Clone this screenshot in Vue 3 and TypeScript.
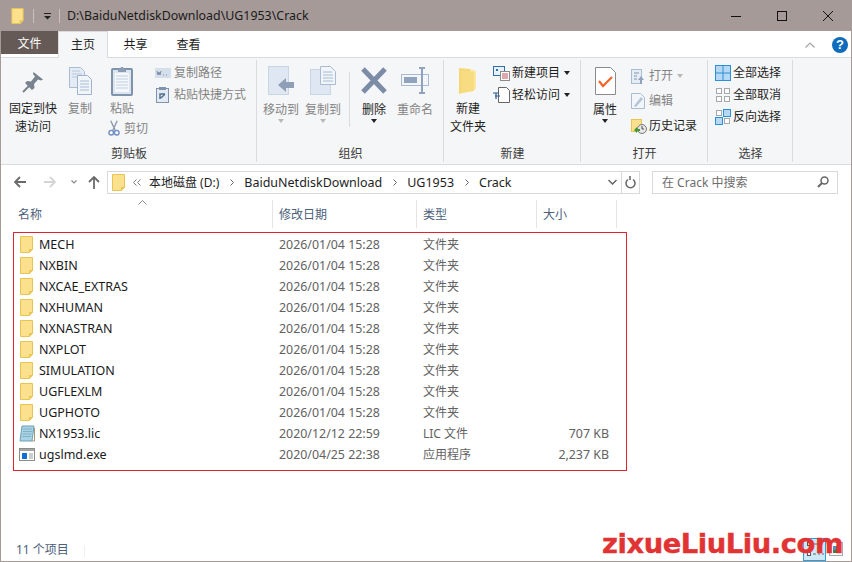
<script setup lang="ts">
interface Row { name: string; date: string; type: string; size: string; icon: string }
const folders = ['MECH', 'NXBIN', 'NXCAE_EXTRAS', 'NXHUMAN', 'NXNASTRAN', 'NXPLOT', 'SIMULATION', 'UGFLEXLM', 'UGPHOTO']
const rows: Row[] = [
  ...folders.map((name) => ({ name, date: '2026/01/04 15:28', type: '文件夹', size: '', icon: 'i-folder' })),
  { name: 'NX1953.lic', date: '2020/12/12 22:59', type: 'LIC 文件', size: '707 KB', icon: 'i-note' },
  { name: 'ugslmd.exe', date: '2020/04/25 22:38', type: '应用程序', size: '2,237 KB', icon: 'i-exe' },
]
const crumbs = ['本地磁盘 (D:)', 'BaiduNetdiskDownload', 'UG1953', 'Crack']
const columns = [
  { label: '名称', width: 255 },
  { label: '修改日期', width: 144 },
  { label: '类型', width: 120 },
  { label: '大小', width: 80 },
]
</script>

<template>
  <div class="window">
    <svg class="defs" width="0" height="0">
      <symbol id="i-folder" viewBox="0 0 13 17">
        <path d="M.5.5h12v13h-3v3H.5z" fill="#fbe08e" stroke="#e8c452" />
        <path d="M9.500 16.500v-3h3z" fill="#f5d36d" stroke="#e8c452" />
      </symbol>
      <symbol id="i-note" viewBox="0 0 16 17">
        <path d="M3 1h12l-2 15H1z" fill="#a8d3e4" stroke="#6f9fb2" />
        <path d="M4 4h9M4 6.500h9M3.500 9h9M3 11.500h9" stroke="#7fb2c6" />
        <path d="M13 16h2.500V3" fill="none" stroke="#a49677" />
      </symbol>
      <symbol id="i-exe" viewBox="0 0 16 13">
        <rect x=".5" y=".5" width="15" height="12" fill="#fff" stroke="#8c8c8c" />
        <rect x="1" y="1" width="14" height="2" fill="#a5a5a5" />
        <rect x="3" y="5" width="5" height="6" fill="#0f6fd0" />
        <path d="M10 6h4M10 8h4M10 10h4" stroke="#9a9a9a" />
      </symbol>
    </svg>

    <header class="titlebar">
      <svg class="t-folder" width="13" height="16"><use href="#i-folder" /></svg>
      <span class="t-sep"></span>
      <svg class="t-drop" width="9" height="7" viewBox="0 0 9 7"><path d="M1 .5h7" stroke="#222" /><path d="M1 3h7L4.500 6.500z" fill="#222" /></svg>
      <span class="t-sep t-sep2"></span>
      <span class="t-title">D:\BaiduNetdiskDownload\UG1953\Crack</span>
      <div class="t-controls">
        <svg width="12" height="12" viewBox="0 0 12 12"><path d="M1 6.500h10" stroke="#111" /></svg>
        <svg width="12" height="12" viewBox="0 0 12 12"><rect x="1.500" y="1.500" width="9" height="9" fill="none" stroke="#111" /></svg>
        <svg width="12" height="12" viewBox="0 0 12 12"><path d="M1 1l10 10M11 1L1 11" stroke="#111" /></svg>
      </div>
    </header>

    <nav class="tabs">
      <span class="tab file">文件</span>
      <span class="tab active">主页</span>
      <span class="tab">共享</span>
      <span class="tab">查看</span>
      <span class="spacer"></span>
      <svg class="collapse" width="10" height="6" viewBox="0 0 10 6"><path d="M.5 5.500L5 1l4.500 4.500" fill="none" stroke="#a5a5a5" stroke-width="1.200" /></svg>
      <span class="help">?</span>
    </nav>

    <section class="ribbon">
      <div class="group g-clip">
        <div class="g-body">
          <div class="big w-pin">
            <svg class="ico" width="26" height="30" viewBox="0 0 26 30"><path d="M13.500 6L23 13.500l-2 1-3-1-4 4.500.5 4-2.500 2-7-7 2-2 4 .5 4-5-2-2.500z" fill="#79838f" /><path d="M9 20l-6 6" stroke="#79838f" stroke-width="2" /></svg>
            <span>固定到快<br />速访问</span>
          </div>
          <div class="big w-copy off">
            <svg class="ico" width="25" height="30" viewBox="0 0 25 30"><path d="M1.500 1.500h11l4 4v16h-15z" fill="#e4ebf4" stroke="#a9bcd3" /><path d="M4 5h8M4 8h10M4 11h5" stroke="#b9c8da" /><path d="M9.500 9.500h10l4 4v15h-14z" fill="#f1f5fa" stroke="#9fb4cf" /><path d="M12 15h9M12 18h9M12 21h9M12 24h9" stroke="#a9bcd3" /></svg>
            <span>复制</span>
          </div>
          <div class="paste-col">
            <div class="big off">
              <svg class="ico" width="22" height="30" viewBox="0 0 22 30"><rect x="1" y="3" width="20" height="26" rx="1" fill="#dce4ee" stroke="#7f93ad" stroke-width="2" /><rect x="4" y="7" width="14" height="19" fill="#f4f7fb" /><path d="M5 10h12M5 13h12M5 16h12M5 19h12M5 22h12" stroke="#c2cfdf" /><path d="M7 6V3h2l1-2h2l1 2h2v3z" fill="#8d9db3" /></svg>
              <span>粘贴</span>
            </div>
            <div class="small off cut">
              <svg width="13" height="17" viewBox="0 0 13 17"><path d="M3 0l5 11M10 0L5 11" stroke="#8d99ab" stroke-width="1.500" /><circle cx="3.500" cy="13" r="2.500" fill="none" stroke="#6f8fc0" stroke-width="1.500" /><circle cx="9.500" cy="13" r="2.500" fill="none" stroke="#6f8fc0" stroke-width="1.500" /></svg>
              <span class="cut-label">剪切</span>
            </div>
          </div>
          <div class="small-col clip-small">
            <div class="small off">
              <svg width="16" height="10" viewBox="0 0 16 10"><rect width="16" height="10" fill="#d5dfec" /><path d="M2 3l1 4 1-3 1 3 1-4M8 7h1M11 7h1" stroke="#7b8ca3" fill="none" /></svg>
              <span>复制路径</span>
            </div>
            <div class="small off">
              <svg class="shortcut" width="13" height="16" viewBox="0 0 13 16"><rect x=".5" y="1.500" width="12" height="14" fill="#e3eaf3" stroke="#7f93ad" /><rect x="3" y="0" width="7" height="3" fill="#7f93ad" /><path d="M4 12V7h5M9 7l-4 4" fill="none" stroke="#53708f" stroke-width="1.500" /></svg>
              <span>粘贴快捷方式</span>
            </div>
          </div>
        </div>
        <div class="g-label">剪贴板</div>
      </div>

      <div class="group g-org">
        <div class="g-body">
          <div class="big w-move off lower">
            <svg class="ico" width="27" height="30" viewBox="0 0 27 30"><rect x=".5" y=".5" width="20" height="28" fill="#dfe7f2" stroke="#c9d6e6" /><path d="M10 19l8-7v4h8v6h-8v4z" fill="#8e9fb7" /></svg>
            <span>移动到</span><i class="arr off-arr"></i>
          </div>
          <div class="big w-copyto off lower">
            <svg class="ico" width="27" height="30" viewBox="0 0 27 30"><rect x=".5" y="3.500" width="20" height="25" fill="#dfe7f2" stroke="#c9d6e6" /><path d="M10.500.5h10l5 5v13h-15z" fill="#f1f5fa" stroke="#a9bcd3" /><path d="M13 6h9M13 9h10M13 12h10M13 15h10" stroke="#a9bcd3" /></svg>
            <span>复制到</span><i class="arr off-arr"></i>
          </div>
          <span class="inner-sep"></span>
          <div class="big w-del lower">
            <svg class="ico" width="26" height="30" viewBox="0 0 26 30"><path d="M2 3l22 23M24 3L2 26" stroke="#7c8ca7" stroke-width="5" /></svg>
            <span>删除</span><i class="arr"></i>
          </div>
          <div class="big w-ren off lower">
            <svg class="ico" width="29" height="30" viewBox="0 0 29 30"><rect x=".5" y="8.500" width="27" height="11" fill="#f2f5fa" stroke="#a8b9d0" /><rect x="3" y="11" width="13" height="6" fill="#8fa3be" /><path d="M18 2h6M18 27h6M21 2v25" stroke="#8fa3be" stroke-width="2" /></svg>
            <span>重命名</span>
          </div>
        </div>
        <div class="g-label">组织</div>
      </div>

      <div class="group g-new">
        <div class="g-body">
          <div class="big w-newf">
            <svg class="ico" width="20" height="30" viewBox="0 0 20 30"><path d="M1 2l11 1v22L1 28z" fill="#f6d977" /><path d="M12 3l6 2v18l-6 3z" fill="#fbe7a1" /><path d="M4 5l12 1v19l-12 2z" fill="#f7dc82" /></svg>
            <span>新建<br />文件夹</span>
          </div>
          <div class="small-col new-small">
            <div class="small">
              <svg width="17" height="15" viewBox="0 0 17 15"><rect x=".5" y=".5" width="11" height="9" fill="#e8f1fa" stroke="#2f6ea8" /><rect x="3" y="3" width="2" height="2" fill="#2f6ea8" /><rect x="7.500" y="5.500" width="9" height="9" fill="#fff" stroke="#8b8b8b" /><path d="M9 8h6M9 10h6M9 12h6" stroke="#c05050" /></svg>
              <span>新建项目</span><i class="arr inline"></i>
            </div>
            <div class="small">
              <svg width="17" height="16" viewBox="0 0 17 16"><path d="M5.500.5h8l3 3v12h-11z" fill="#fff" stroke="#666" /><path d="M0 6h6M2 9h5M3 6v6" stroke="#2b5b93" stroke-width="1.200" /></svg>
              <span>轻松访问</span><i class="arr inline"></i>
            </div>
          </div>
        </div>
        <div class="g-label">新建</div>
      </div>

      <div class="group g-open">
        <div class="g-body">
          <div class="big w-prop lower">
            <svg class="ico" width="21" height="28" viewBox="0 0 21 28"><path d="M.5.5h15l5 5v22H.5z" fill="#fff" stroke="#8b8b8b" /><path d="M4 14l4 5 9-9" fill="none" stroke="#f0672a" stroke-width="2.200" /></svg>
            <span>属性</span><i class="arr"></i>
          </div>
          <div class="small-col open-small">
            <div class="small off">
              <svg class="narrow" width="14" height="15" viewBox="0 0 14 15"><rect x=".5" y=".5" width="10" height="14" fill="#e7edf5" stroke="#a9bcd3" /><path d="M3 4h5M3 7h3M3 10h3" stroke="#7f93ad" /><path d="M7 11l3-4 3 4h-2v4H9v-4z" fill="#8fa3be" /></svg>
              <span>打开</span><i class="arr inline off-arr"></i>
            </div>
            <div class="small off">
              <svg class="narrow" width="14" height="16" viewBox="0 0 14 16"><path d="M.5.500h9l4 4v11H.5z" fill="#f2f5fa" stroke="#a9bcd3" /><path d="M3 13l7-9 2 2-7 8z" fill="#b4c3d7" /></svg>
              <span>编辑</span>
            </div>
            <div class="small hist">
              <svg width="16" height="15" viewBox="0 0 16 15"><rect x=".5" y=".5" width="10" height="12" fill="#fbe08e" stroke="#e8c452" /><circle cx="11" cy="10" r="4.500" fill="#e6e6e6" stroke="#777" /><path d="M11 7v3h2" stroke="#555" fill="none" /><path d="M3 11l3-3v2h3v2H6v2z" fill="#3d9b37" /></svg>
              <span>历史记录</span>
            </div>
          </div>
        </div>
        <div class="g-label">打开</div>
      </div>

      <div class="group g-sel">
        <div class="g-body">
          <div class="small-col sel-small">
            <div class="small">
              <svg width="16" height="16" viewBox="0 0 16 16"><rect x=".5" y=".5" width="15" height="15" fill="#b5d8f4" stroke="#2d8fd6" /><path d="M8 0v16M0 8h16" stroke="#2d8fd6" /></svg>
              <span>全部选择</span>
            </div>
            <div class="small">
              <svg width="16" height="16" viewBox="0 0 16 16"><g fill="#fff" stroke="#a8a8a8"><rect x="1.500" y="1.500" width="5" height="5" /><rect x="9.500" y="1.500" width="5" height="5" /><rect x="1.500" y="9.500" width="5" height="5" /><rect x="9.500" y="9.500" width="5" height="5" /></g></svg>
              <span>全部取消</span>
            </div>
            <div class="small">
              <svg width="16" height="16" viewBox="0 0 16 16"><g fill="#fff" stroke="#a8a8a8"><rect x="1.500" y="1.500" width="5" height="5" /><rect x="9.500" y="9.500" width="5" height="5" /></g><g fill="#b5d8f4" stroke="#2d8fd6"><rect x="8.500" y=".5" width="7" height="7" /><rect x=".5" y="8.500" width="7" height="7" /></g></svg>
              <span>反向选择</span>
            </div>
          </div>
        </div>
        <div class="g-label">选择</div>
      </div>
    </section>

    <div class="navbar">
      <svg class="n-back" width="12" height="12" viewBox="0 0 12 12"><path d="M6 1L1 6l5 5M1 6h11" fill="none" stroke="#6b6b6b" stroke-width="1.800" /></svg>
      <svg class="n-fwd" width="12" height="12" viewBox="0 0 12 12"><path d="M6 1l5 5-5 5M11 6H0" fill="none" stroke="#d5d5d5" stroke-width="1.800" /></svg>
      <svg class="n-down" width="6" height="4" viewBox="0 0 6 4"><path d="M.5.500L3 3 5.500.5" fill="none" stroke="#8a8a8a" stroke-width="1.200" /></svg>
      <svg class="n-up" width="12" height="13" viewBox="0 0 12 13"><path d="M1 6l5-5 5 5M6 1v12" fill="none" stroke="#6b6b6b" stroke-width="1.800" /></svg>
      <div class="address">
        <svg width="13" height="17" class="a-folder"><use href="#i-folder" /></svg>
        <svg class="chev-dbl" width="8" height="7" viewBox="0 0 8 7"><path d="M3.500.5l-3 3 3 3M7.500.5l-3 3 3 3" fill="none" stroke="#777" /></svg>
        <template v-for="(c, i) in crumbs" :key="c">
          <span class="crumb" :class="{ first: i === 0 }">{{ c }}</span>
          <svg v-if="i < crumbs.length - 1" class="crumb-sep" width="4" height="7" viewBox="0 0 4 7"><path d="M.5.5l3 3-3 3" fill="none" stroke="#666" /></svg>
        </template>
        <span class="spacer"></span>
        <svg class="a-drop" width="9" height="6" viewBox="0 0 9 6"><path d="M.5 1l4 4 4-4" fill="none" stroke="#666" stroke-width="1.500" /></svg>
        <span class="a-refresh">
          <svg width="11" height="13" viewBox="0 0 11 13"><path d="M3 3.500a4.500 4.500 0 1 0 5 0M5 0v4" fill="none" stroke="#666" stroke-width="1.500" /></svg>
        </span>
      </div>
      <div class="search">
        <span class="s-text">在 Crack 中搜索</span>
        <svg width="12" height="12" viewBox="0 0 12 12"><circle cx="7.500" cy="4.500" r="3.500" fill="none" stroke="#666" stroke-width="1.500" /><path d="M5 7l-4 4" stroke="#666" stroke-width="2" /></svg>
      </div>
    </div>

    <main class="content">
      <div class="head">
        <svg class="sort" width="9" height="5" viewBox="0 0 9 5"><path d="M.5 4.500l4-4 4 4" fill="none" stroke="#8a8a8a" /></svg>
        <div v-for="c in columns" :key="c.label" class="head-cell" :style="{ width: c.width + 'px' }">{{ c.label }}</div>
      </div>
      <div class="marked">
        <div v-for="r in rows" :key="r.name" class="row">
          <svg class="r-ico" :class="{ wide: r.icon !== 'i-folder' }" :width="r.icon === 'i-folder' ? 13 : 16" :height="r.icon === 'i-exe' ? 13 : 17"><use :href="'#' + r.icon" /></svg>
          <span class="r-name">{{ r.name }}</span>
          <span class="r-date">{{ r.date }}</span>
          <span class="r-type">{{ r.type }}</span>
          <span class="r-size">{{ r.size }}</span>
        </div>
      </div>
    </main>

    <footer class="status">
      <span class="count">11 个项目</span>
      <span class="s-sep"></span>
      <span class="spacer"></span>
      <span class="view on">
        <svg width="20" height="17" viewBox="0 0 20 17"><rect x="2.500" y="1.500" width="3" height="3" fill="#fff" stroke="#555" /><rect x="2.500" y="11.500" width="3" height="3" fill="#fff" stroke="#555" /><path d="M8 3h10M8 13h3M13 13h2M17 13h2" stroke="#666" /></svg>
      </span>
      <span class="view">
        <svg width="14" height="14" viewBox="0 0 14 14"><rect x=".5" y=".5" width="13" height="13" fill="#fff" stroke="#a8a8a8" /><rect x="4" y="4" width="7" height="7" fill="#5a8fb8" /><rect x="4" y="8" width="7" height="3" fill="#4b7a3e" /></svg>
      </span>
    </footer>

    <div class="watermark">zixueLiuLiu.com</div>
  </div>
</template>

<style scoped>
.window {
  position: relative;
  box-sizing: border-box;
  width: 852px;
  height: 562px;
  display: flex;
  flex-direction: column;
  overflow: hidden;
  background: #fff;
  border: 1px solid #a69a98;
  border-top: 0;
  font: 12px/16px "Noto Sans", "Noto Sans CJK SC", sans-serif;
  color: #1e1e1e;
}
.defs { position: absolute; }
.spacer { flex: 1; }

.titlebar {
  flex: none;
  height: 31px;
  margin: 0 -1px;
  background: #a69a98;
  display: flex;
  align-items: center;
}
.t-folder { margin-left: 11px; }
.t-sep { width: 1px; height: 14px; background: #c8c0be; margin-left: 9px; }
.t-drop { margin-left: 9px; margin-top: 2px; }
.t-sep2 { margin-left: 7px; }
.t-title { margin-left: 7px; font-size: 12.4px; color: #1a1a1a; }
.t-controls { margin-left: auto; display: flex; gap: 34px; padding-right: 18px; }

.tabs {
  flex: none;
  height: 27px;
  display: flex;
  align-items: center;
  position: relative;
}
.tab { width: 53px; text-align: center; font-size: 12px; }
.tab.file { width: 57px; align-self: stretch; line-height: 25px; height: 23px; margin-bottom: 4px; background: #665a57; color: #fff; }
.tab.active {
  width: 50px;
  align-self: stretch;
  line-height: 25px;
  background: #f5f6f7;
  border: 1px solid #dadbdc;
  border-bottom: 0;
  box-sizing: border-box;
  margin-right: 1px;
}
.collapse { margin-right: 17px; }
.help {
  width: 16px;
  height: 16px;
  margin-right: 3px;
  border-radius: 50%;
  background: #0f6cbd;
  color: #fff;
  font: bold 13px/16px "Liberation Sans", sans-serif;
  text-align: center;
}

.ribbon {
  flex: none;
  height: 108px;
  box-sizing: border-box;
  background: #f5f6f7;
  border-top: 1px solid #dadbdc;
  border-bottom: 1px solid #dadbdc;
  margin-top: -1px;
  display: flex;
}
.group { display: flex; flex-direction: column; position: relative; }
.group::after {
  content: "";
  position: absolute;
  right: 0;
  top: 2px;
  bottom: 2px;
  width: 1px;
  background: #dadbdc;
}
.g-body { flex: 1; display: flex; min-height: 0; }
.g-label { height: 22px; margin-bottom: -2px; text-align: center; color: #3c3c3c; line-height: 20px; }
.g-clip { width: 256px; }
.g-org { width: 187px; }
.g-new { width: 137px; }
.g-open { width: 127px; }
.g-sel { width: 85px; }

.big {
  display: flex;
  flex-direction: column;
  align-items: center;
  text-align: center;
  line-height: 18px;
  padding-top: 8px;
  flex: none;
  white-space: nowrap;
}
.ico { height: 30px; margin-bottom: 4px; }
.big .ico { display: block; }
.lower .ico { margin-bottom: 5px; }
.off { color: #848484; }
.w-pin { width: 60px; margin-left: 2px; color: #1e1e1e; }
.w-copy { width: 34px; }
.paste-col { width: 48px; margin-left: 3px; }
.paste-col .big { width: 44px; }
.cut { margin-top: 2px; padding-left: 8px; }
.cut .cut-label { margin-left: 4px; }
.small { display: flex; align-items: center; white-space: nowrap; }
.small-col { display: flex; flex-direction: column; }
.clip-small { margin-left: 7px; padding-top: 7px; gap: 6px; }
.clip-small .small { height: 16px; }
.clip-small span { margin-left: 3px; }
.clip-small svg { flex: none; }
.clip-small .shortcut { margin-left: 1px; margin-right: 2px; }
.w-move { width: 42px; margin-left: 3px; }
.w-copyto { width: 42px; }
.inner-sep { width: 1px; height: 55px; margin: 14px 0 0 5px; background: #dadbdc; }
.w-del { width: 48px; margin-left: 0; }
.w-ren { width: 34px; }
.arr {
  width: 0;
  height: 0;
  margin-top: 0;
  border: 3px solid transparent;
  border-top: 4px solid #222;
  border-bottom: 0;
}
.off-arr { border-top-color: #b8b8b8; }
.arr.inline { margin: 0 0 0 4px; }
.w-newf { width: 48px; }
.new-small { margin-left: 1px; padding-top: 7px; gap: 6px; }
.new-small .small { height: 16px; }
.new-small span { margin-left: 2px; }
.w-prop { width: 48px; }
.open-small { margin-left: 2px; padding-top: 10px; gap: 9px; }
.open-small .small { height: 16px; }
.open-small span { margin-left: 2px; }
.open-small .narrow { margin-right: 2px; }
.sel-small { margin-left: 7px; padding-top: 7px; gap: 6px; }
.sel-small .small { height: 16px; }
.sel-small span { margin-left: 2px; }

.navbar {
  flex: none;
  height: 34px;
  display: flex;
  align-items: center;
  box-sizing: border-box;
}
.n-back { margin-left: 13px; }
.n-fwd { margin-left: 18px; }
.n-down { margin-left: 15px; }
.n-up { margin-left: 11px; }
.address {
  box-sizing: border-box;
  width: 533px;
  height: 23px;
  margin-left: 7px;
  border: 1px solid #d9d9d9;
  display: flex;
  align-items: center;
  background: #fff;
}
.a-folder { margin-left: 4px; }
.chev-dbl { margin-left: 8px; }
.crumb { color: #1e1e1e; font-size: 12.5px; margin-right: 11px; padding-top: 2px; }
.crumb.first { margin-left: 8px; font-size: 12px; }
.crumb-sep { margin-right: 10px; }
.a-drop { margin-right: 4px; }
.a-refresh {
  width: 17px;
  align-self: stretch;
  border-left: 1px solid #d9d9d9;
  display: flex;
  align-items: center;
  justify-content: center;
}
.search {
  box-sizing: border-box;
  width: 186px;
  height: 23px;
  margin-left: 12px;
  border: 1px solid #d9d9d9;
  display: flex;
  align-items: center;
  justify-content: space-between;
  padding: 0 8px 0 9px;
  color: #6d6d6d;
}
.s-text { padding-top: 2px; }

.content { flex: 1; min-height: 0; }
.head { display: flex; height: 33px; padding-left: 17px; position: relative; box-sizing: border-box; padding-top: 1px; }
.sort { position: absolute; left: 137px; top: 1px; }
.head-cell {
  box-sizing: border-box;
  height: 28px;
  flex: none;
  line-height: 29px;
  color: #4c607a;
  border-right: 1px solid #e4e4e4;
  padding-left: 6px;
}
.head-cell:first-of-type { padding-left: 0; }
.marked {
  box-sizing: border-box;
  width: 614px;
  height: 239px;
  margin-left: 12px;
  padding-top: 1px;
  border: 1px solid #e0242e;
}
.row { height: 21px; display: flex; align-items: center; }
.r-ico { flex: none; margin-left: 6px; }
.r-ico.wide { margin-left: 5px; margin-right: -2px; }
.r-name { flex: none; width: 240px; margin-left: 6px; color: #1a1a1a; font-size: 12.5px; }
.r-date { width: 144px; color: #626262; font-size: 12.4px; }
.r-type { width: 100px; color: #626262; }
.r-size { width: 86px; text-align: right; color: #626262; font-size: 12.4px; }

.status {
  flex: none;
  height: 23px;
  display: flex;
  align-items: flex-end;
  position: relative;
  padding-right: 8px;
}
.count { margin-left: 15px; margin-bottom: 3px; color: #4c607a; }
.s-sep { width: 1px; height: 12px; margin: 0 0 4px 15px; background: #f0f0f0; }
.view { display: flex; align-items: center; justify-content: center; box-sizing: border-box; height: 23px; }
.view.on { width: 23px; background: #cfe8f8; border: 1px solid #27a0dc; margin-right: 3px; }
.view:not(.on) { height: 14px; margin-bottom: 5px; }

.watermark {
  position: absolute;
  right: 8px;
  bottom: 1px;
  font: bold 27.4px/32px "DejaVu Sans", sans-serif;
  letter-spacing: -0.45px;
  -webkit-text-stroke: 0.4px #e13333;
  color: #e13333;
  white-space: nowrap;
}
</style>

<style>
html, body { margin: 0; background: #fff; }
</style>
